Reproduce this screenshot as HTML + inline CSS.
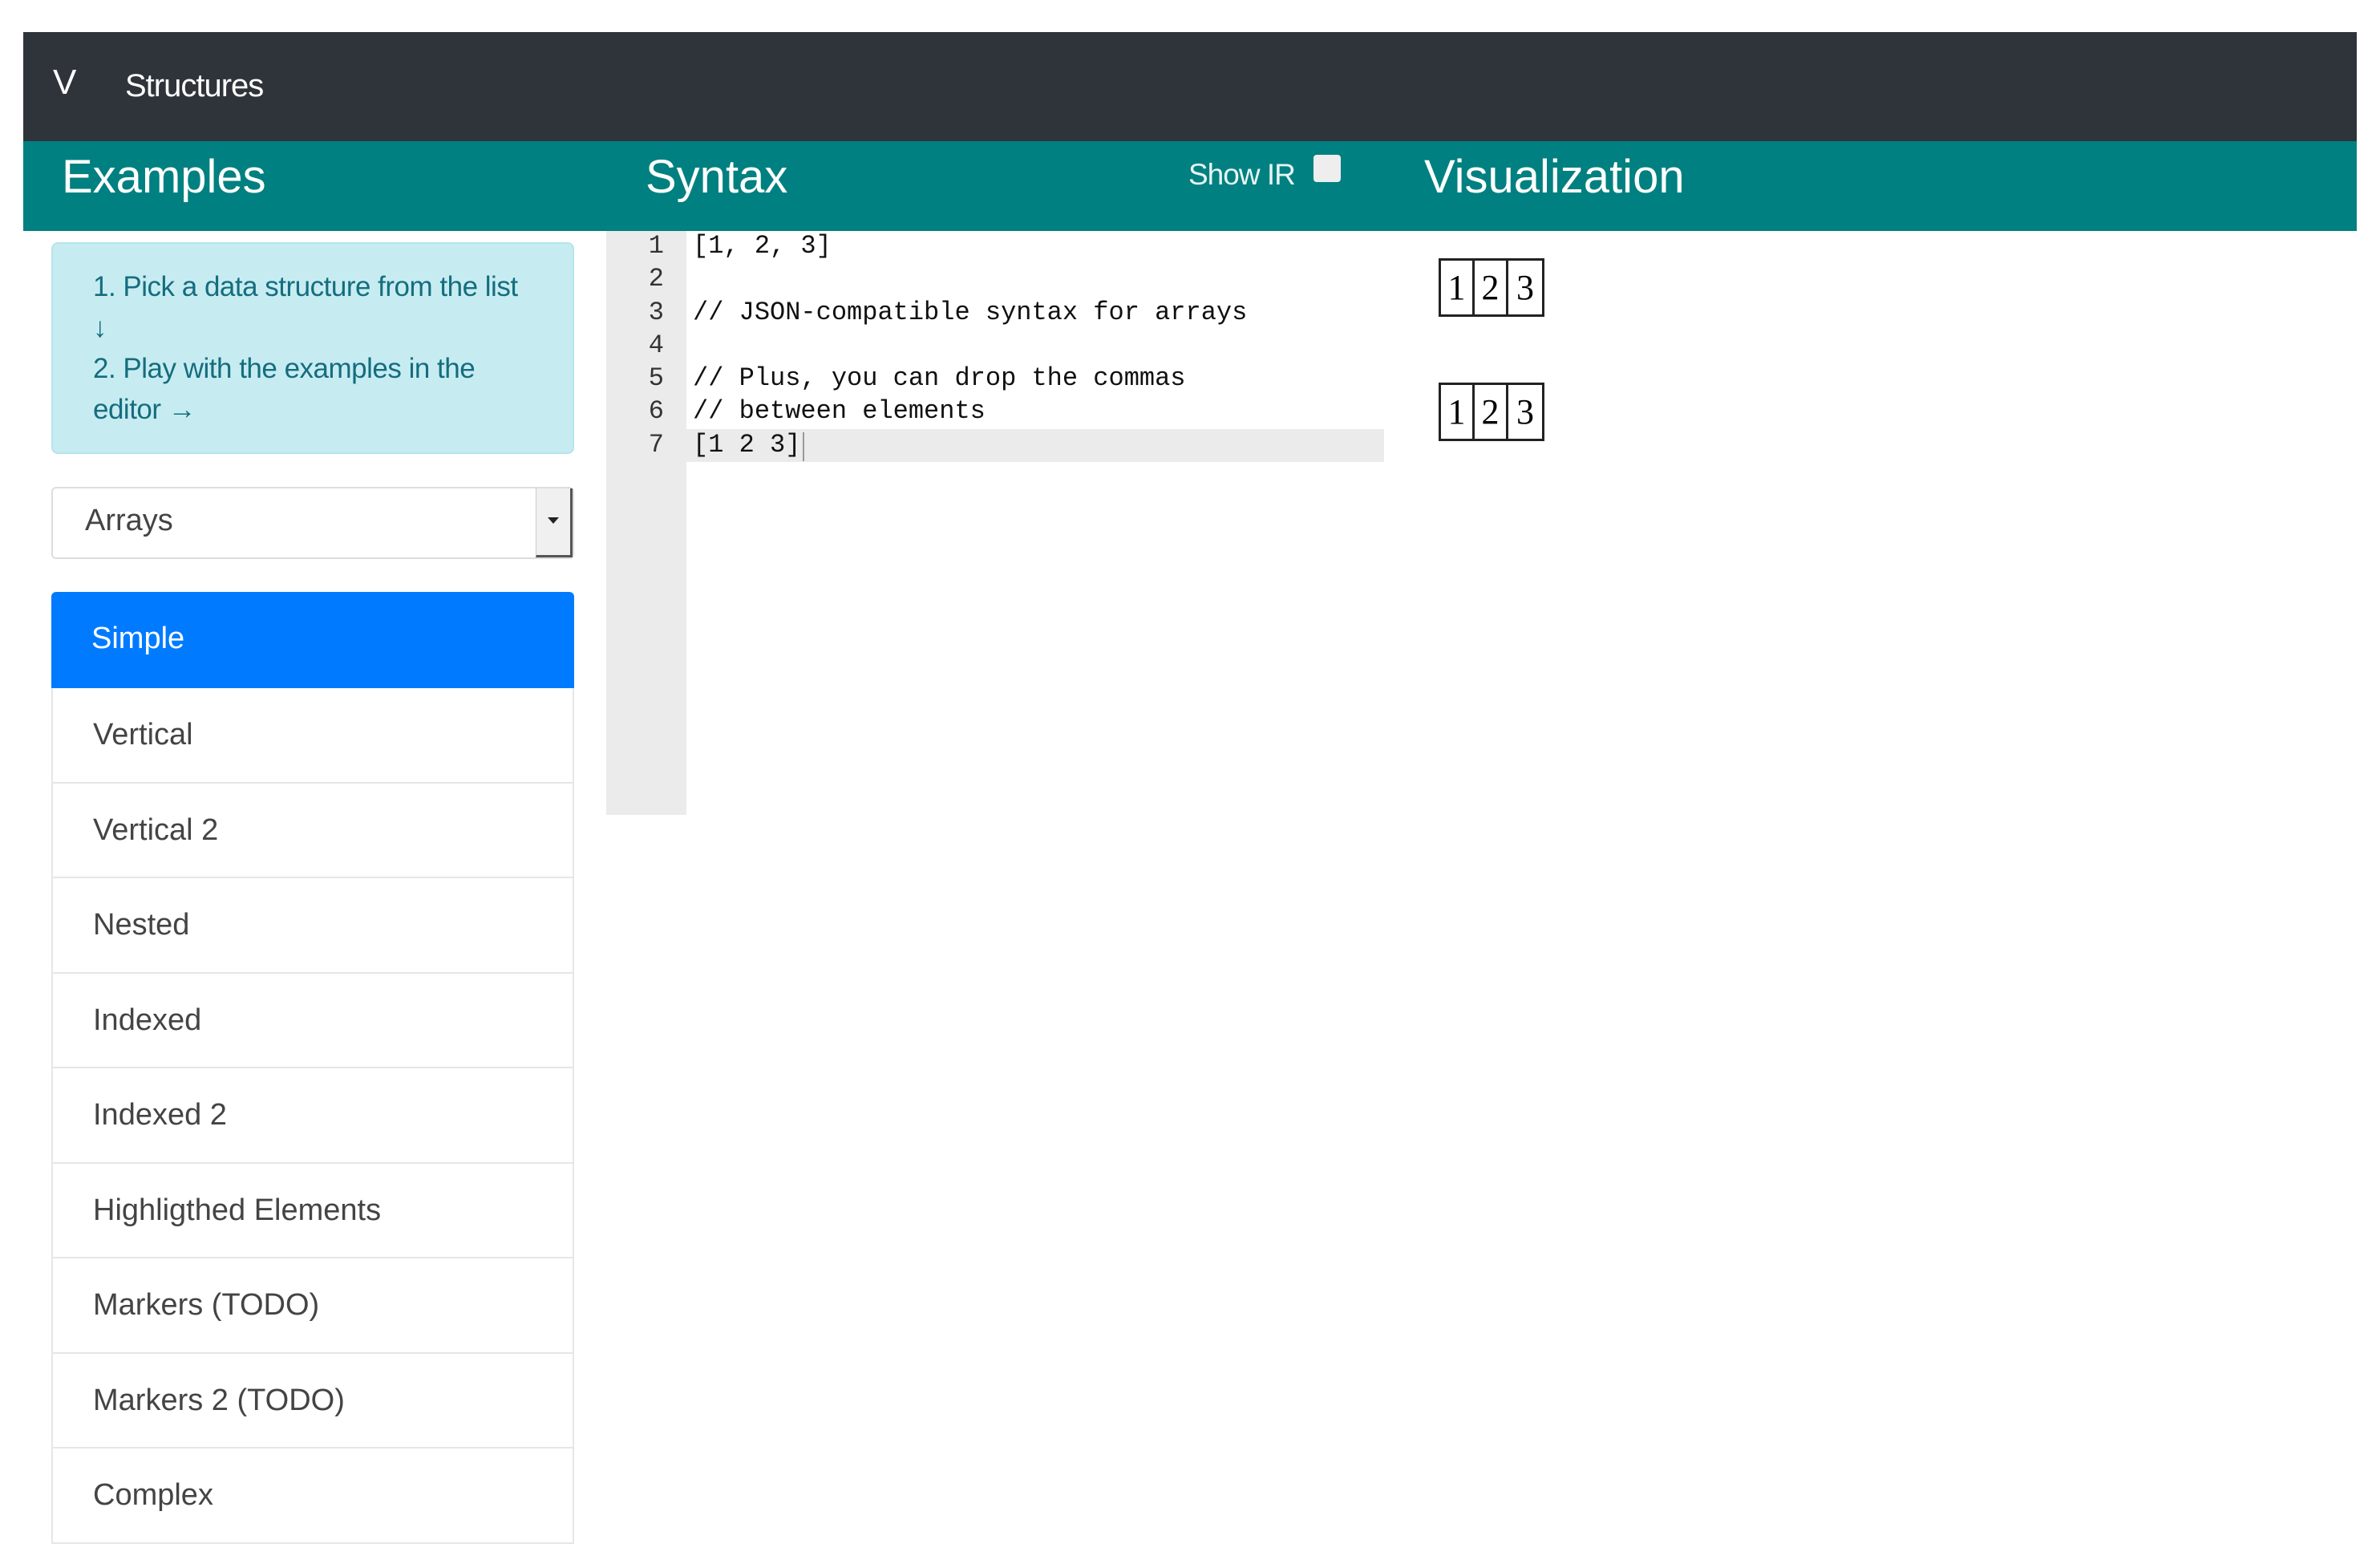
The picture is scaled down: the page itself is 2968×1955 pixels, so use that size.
<!DOCTYPE html>
<html><head><meta charset="utf-8"><style>
*{box-sizing:border-box;margin:0;padding:0}
body{width:2968px;height:1955px;background:#fff;position:relative;overflow:hidden;font-family:"Liberation Sans",sans-serif}
.abs{position:absolute}
.nav{left:29px;top:40px;width:2910px;height:136px;background:#2f343b}
.hdr{left:29px;top:176px;width:2910px;height:112px;background:#008080}
.h{color:#fff;font-size:58px;top:186px;line-height:70px}
.info{left:64px;top:302px;width:652px;height:264px;background:#c6ecf1;border:2px solid #b5e4ec;border-radius:8px;padding:28px 0 0 50px;color:#156d7e;font-size:35px;line-height:51px;letter-spacing:-.5px}
.sel{left:64px;top:607px;width:652px;height:90px;border:2px solid #ddd;border-radius:6px;font-size:38px;color:#444;padding:19px 0 0 40px}
.selbtn{position:absolute;right:0;top:0;width:46px;height:86px;background:#f0f0f0;border-left:1px solid #ccc;border-right:3px solid #555;border-bottom:3px solid #555}
.list{left:64px;top:738px;width:652px}
.it{height:118.5px;border:2px solid #e6e6e6;border-top:none;font-size:38px;color:#444;padding-left:50px;line-height:116px}
.it.a{background:#007bff;color:#fff;border:none;border-radius:6px 6px 0 0;height:120px}
.gut{left:756px;top:288px;width:100px;height:728px;background:#ebebeb}
.code{font-family:"Liberation Mono",monospace;font-size:32px;line-height:41.3px;color:#111}
.ln{left:756px;top:286px;width:72px;text-align:right;color:#333}
.hl{left:756px;top:535px;width:970px;height:41px;background:#ebebeb}
.txt{left:864px;top:286px;white-space:pre}
.arr{position:absolute;left:1794px;display:flex;border:3px solid #222;height:73px}
.arr div{width:42px;border-right:3px solid #222;font-family:"Liberation Serif",serif;font-size:44px;text-align:center;line-height:68px}
.arr div:last-child{border-right:none}
</style></head><body>
<div class="abs nav"></div>
<div class="abs" style="left:66px;top:78px;color:#fff;font-size:44px">V</div>
<div class="abs" style="left:156px;top:85px;color:#fff;font-size:40px;letter-spacing:-1px">Structures</div>
<div class="abs hdr"></div>
<div class="abs h" style="left:77px">Examples</div>
<div class="abs h" style="left:805px">Syntax</div>
<div class="abs h" style="left:1776px">Visualization</div>
<div class="abs" style="left:1482px;top:197px;color:#e8f4f4;font-size:37px;letter-spacing:-1px">Show IR</div>
<div class="abs" style="left:1638px;top:193px;width:34px;height:34px;background:#eee;border-radius:4px"></div>
<div class="abs info">1. Pick a data structure from the list<br>↓<br>2. Play with the examples in the<br>editor →</div>
<div class="abs sel">Arrays<div class="selbtn"><span style="position:absolute;left:14px;top:36px;border-left:7px solid transparent;border-right:7px solid transparent;border-top:8px solid #222"></span></div></div>
<div class="abs list">
<div class="it a">Simple</div><div class="it">Vertical</div><div class="it">Vertical 2</div><div class="it">Nested</div><div class="it">Indexed</div><div class="it">Indexed 2</div><div class="it">Highligthed Elements</div><div class="it">Markers (TODO)</div><div class="it">Markers 2 (TODO)</div><div class="it">Complex</div>
</div>
<div class="abs gut"></div>
<div class="abs hl"></div>
<div class="abs code ln">1<br>2<br>3<br>4<br>5<br>6<br>7</div>
<div class="abs code txt">[1, 2, 3]

// JSON-compatible syntax for arrays

// Plus, you can drop the commas
// between elements
[1 2 3]</div>
<div class="abs" style="left:1001px;top:539px;width:2px;height:36px;background:#999"></div>
<div class="arr" style="top:322px"><div>1</div><div>2</div><div>3</div></div>
<div class="arr" style="top:477px"><div>1</div><div>2</div><div>3</div></div>
</body></html>
